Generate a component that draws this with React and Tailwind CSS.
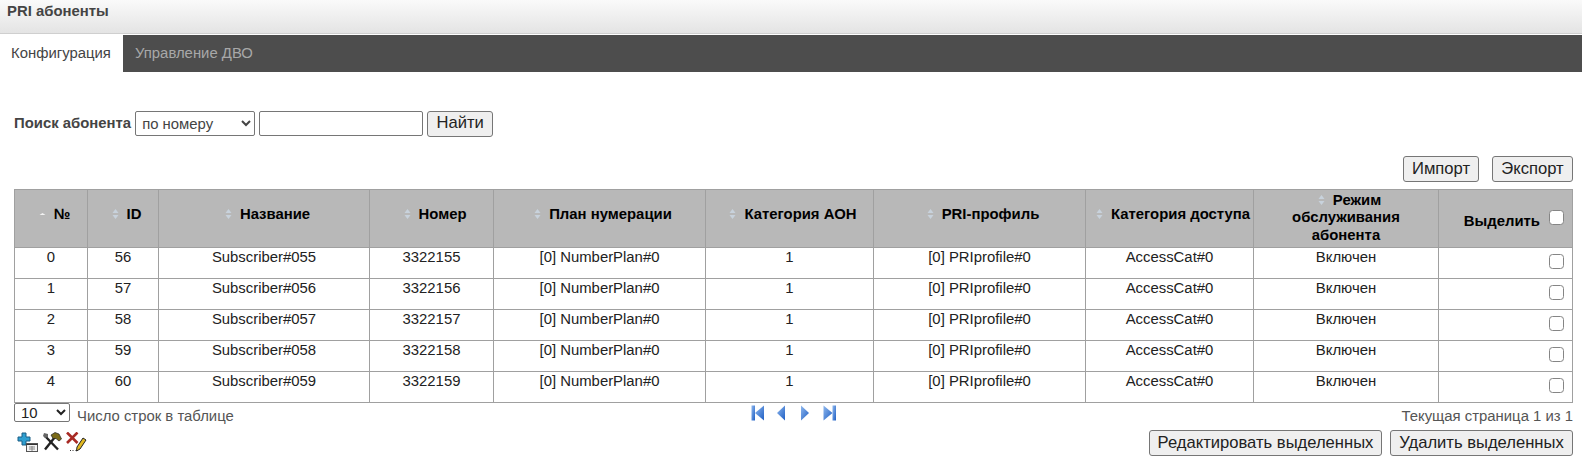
import React from 'react';

const columns = [
    { title: ['№'], width: 73, sort: 'asc' },
    { title: ['ID'], width: 71, sort: 'none' },
    { title: ['Название'], width: 211, sort: 'none' },
    { title: ['Номер'], width: 124, sort: 'none' },
    { title: ['План нумерации'], width: 212, sort: 'none' },
    { title: ['Категория АОН'], width: 168, sort: 'none' },
    { title: ['PRI-профиль'], width: 212, sort: 'none' },
    { title: ['Категория доступа'], width: 168, sort: 'none' },
    { title: ['Режим', 'обслуживания', 'абонента'], width: 185, sort: 'none' },
];

const rows = [0, 1, 2, 3, 4].map((i) => [
    i,
    56 + i,
    `Subscriber#05${5 + i}`,
    3322155 + i,
    '[0] NumberPlan#0',
    1,
    '[0] PRIprofile#0',
    'AccessCat#0',
    'Включен',
]);

const SortIcon = ({ sort }) => (
    <svg width="9" height="12" viewBox="0 0 9 12" className="inline-block align-[-1px] ml-[6px] mr-[7px]">
        {sort === 'asc' ? (
            <path d="M1.5 7 L4.5 5 L7.5 7 Z" fill="#f2f2f2" />
        ) : (
            <>
                <path d="M1.5 5 L4.5 1 L7.5 5 Z" fill="#c8d2dc" />
                <path d="M1.5 7 L4.5 11 L7.5 7 Z" fill="#c8d2dc" />
            </>
        )}
    </svg>
);

const Btn = ({ children, className = '' }) => (
    <button className={`h-[26px] p-0 bg-[#efefef] border border-[#767676] rounded-[3px] text-[16.6px] leading-none text-[#222] ${className}`}>
        {children}
    </button>
);

const Check = () => (
    <input type="checkbox" className="appearance-none inline-block w-[15px] h-[15px] m-0 bg-white border border-[#858585] rounded-[3.5px]" />
);

const PagerIcon = ({ d, bar }) => (
    <svg width="14" height="16" viewBox="0 0 14 16">
        <defs>
            <linearGradient id="pg" x1="0" y1="0" x2="1" y2="1">
                <stop offset="0" stopColor="#8fb8ee" />
                <stop offset="1" stopColor="#1f5fc4" />
            </linearGradient>
        </defs>
        {bar !== undefined && <rect x={bar} y="0.5" width="3.5" height="15" fill="url(#pg)" />}
        <path d={d} fill="url(#pg)" />
    </svg>
);

const App = () => {
    return (
        <div className="w-[1582px] h-[460px] overflow-hidden bg-white text-[14.88px] text-[#222] font-['Liberation_Sans',Arial,sans-serif]">
            <div className="h-[34px] bg-gradient-to-b from-[#fafafa] to-[#e4e4e4] border-b border-[#cfcfcf] pl-[7px] pt-[2px] leading-[18px] font-bold text-[#444]">
                PRI абоненты
            </div>
            <div className="mt-[1px] h-[37px] bg-[#4d4d4d] flex">
                <div className="w-[123px] pl-[11px] bg-white text-[#444] flex items-center">Конфигурация</div>
                <div className="pl-[12px] text-[#a8a8a8] flex items-center">Управление ДВО</div>
            </div>

            <div className="mt-[39px] ml-[14px] flex items-center h-[25px]">
                <span className="font-bold text-[#444]">Поиск абонента</span>
                <select className="ml-[4px] w-[120px] h-[25px] pl-[2px] border border-[#767676] rounded-[2px] bg-white text-[#444]">
                    <option>по номеру</option>
                </select>
                <input type="text" className="ml-[4px] w-[164px] h-[25px] border border-[#767676] rounded-[2px] bg-white" />
                <Btn className="ml-[4px] w-[66px] h-[25px]">Найти</Btn>
            </div>

            <div className="mt-[20px] mr-[9px] flex justify-end gap-[13px]">
                <Btn className="w-[76px]">Импорт</Btn>
                <Btn className="w-[81px]">Экспорт</Btn>
            </div>

            <table className="mt-[7px] ml-[14px] w-[1559px] table-fixed border-collapse border border-[#a0a0a0]">
                <colgroup>
                    {columns.map((c) => (
                        <col key={c.title[0]} style={{ width: c.width }} />
                    ))}
                    <col />
                </colgroup>
                <thead>
                    <tr className="h-[58px] bg-[#b8b8b8] text-black">
                        {columns.map((c) => (
                            <th key={c.title[0]} className="border border-[#a0a0a0] font-bold align-middle">
                                <div className={c.title.length === 1 ? '-mt-[8px] leading-[17px]' : '-mt-[1px] leading-[17.6px]'}>
                                    <SortIcon sort={c.sort} />
                                    {c.title.map((line, i) => (
                                        <React.Fragment key={line}>
                                            {i > 0 && <br />}
                                            {line}
                                        </React.Fragment>
                                    ))}
                                </div>
                            </th>
                        ))}
                        <th className="border border-[#a0a0a0] font-bold text-right pr-[8px] pt-[6px] align-middle">
                            <span className="mr-[9px]">Выделить</span>
                            <span className="inline-block align-[1px] leading-none"><Check /></span>
                        </th>
                    </tr>
                </thead>
                <tbody>
                    {rows.map((row) => (
                        <tr key={row[0]} className="h-[31px]">
                            {row.map((cell, idx) => (
                                <td key={idx} className="border border-[#a0a0a0] text-center align-top pt-[1px] leading-[16px]">
                                    {cell}
                                </td>
                            ))}
                            <td className="border border-[#a0a0a0] text-right pr-[8px] align-top pt-[6px] leading-none">
                                <Check />
                            </td>
                        </tr>
                    ))}
                </tbody>
            </table>

            <div className="ml-[14px] mr-[9px] h-[25px] relative flex items-start justify-between">
                <div className="flex items-start">
                    <select className="w-[56px] h-[19px] pl-[2px] border border-[#767676] rounded-[2px] bg-white text-[#222]">
                        <option>10</option>
                    </select>
                    <span className="ml-[7px] mt-[5px] text-[#555] leading-[16px]">Число строк в таблице</span>
                </div>
                <div className="absolute left-[737px] top-[2px] flex gap-[10px]">
                    <PagerIcon bar={0.5} d="M13 0.5 V15.5 L4 8 Z" />
                    <PagerIcon d="M10 0.5 V15.5 L2 8 Z" />
                    <PagerIcon d="M2 0.5 V15.5 L10 8 Z" />
                    <PagerIcon bar={9.5} d="M0.5 0.5 V15.5 L9.5 8 Z" />
                </div>
                <span className="mt-[5px] text-[#555] leading-[16px]">Текущая страница 1 из 1</span>
            </div>

            <div className="ml-[17px] mr-[9px] flex items-start justify-between">
                <div className="flex gap-[4px] mt-[4px]">
                    <svg width="21" height="20" viewBox="0 0 21 20">
                        <path d="M5 1 H9 V5 H13 V9 H9 V13 H5 V9 H1 V5 H5 Z" fill="#2f9fd0" stroke="#1a5f86" />
                        <rect x="9.5" y="11.5" width="11" height="8" fill="#f4f4f4" stroke="#555" />
                        <path d="M9.5 12.5 H20.5" stroke="#333" />
                        <path d="M12 15 H18 M12 17 H18 M15 14 V19" stroke="#888" />
                    </svg>
                    <svg width="20" height="19" viewBox="0 0 20 19">
                        <path d="M3 4 L16 17.5" stroke="#222" strokeWidth="2.4" />
                        <path d="M2 1 L6 2 L6 5 L3 6 L1 4 Z" fill="#666" />
                        <path d="M3 17.5 L13 5" stroke="#222" strokeWidth="2.4" />
                        <path d="M9 3 L13 0.5 L17 2 L19.5 7 L17 9 L14 6.5 L11 6.5 Z" fill="#7a6a18" stroke="#222" strokeWidth="0.7" />
                    </svg>
                    <svg width="21" height="20" viewBox="0 0 21 20">
                        <path d="M1 0.5 L11.5 11 M11.5 0.5 L1 11" stroke="#a82a25" strokeWidth="2.6" />
                        <path d="M11 15 L17 6 L20 8 L14 17 L10.5 19 Z" fill="#e0b820" stroke="#222" strokeWidth="1" />
                        <path d="M4 18.5 H5 M6.5 18.5 H7.5 M9 18.5 H9.5" stroke="#333" />
                    </svg>
                </div>
                <div className="flex gap-[8px] mt-[2px]">
                    <Btn className="w-[233px]">Редактировать выделенных</Btn>
                    <Btn className="w-[183px]">Удалить выделенных</Btn>
                </div>
            </div>
        </div>
    );
};

export default App;
